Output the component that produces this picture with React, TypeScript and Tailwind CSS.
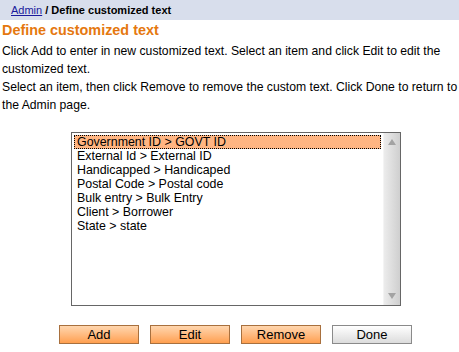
const items = [
  'Government ID > GOVT ID',
  'External Id > External ID',
  'Handicapped > Handicaped',
  'Postal Code > Postal code',
  'Bulk entry > Bulk Entry',
  'Client > Borrower',
  'State > state',
];

const buttons = ['Add', 'Edit', 'Remove'];

const App = () => {
  return (
    <div className="w-[459px] h-[352px] bg-white text-black font-['Liberation_Sans',Arial,sans-serif] overflow-hidden">
      {/* breadcrumb */}
      <div className="h-[20px] bg-[#d8deec] pl-[11px] text-[11px] leading-[20px]">
        <a href="#" className="text-[#1a1a9c] underline">Admin</a>
        <span className="font-bold"> / Define customized text</span>
      </div>

      <h1 className="mt-[1px] pl-[2px] text-[14.4px] leading-[18px] font-bold text-[#e5780f]">
        Define customized text
      </h1>
      <p className="mt-[3px] pl-[2px] text-[12.2px] leading-[18px]">
        Click Add to enter in new customized text. Select an item and click Edit to edit the customized text.
        <br />
        Select an item, then click Remove to remove the custom text. Click Done to return to the Admin page.
      </p>

      {/* list box */}
      <div className="mt-[18px] ml-[71px] w-[330px] h-[174px] border border-[#666] flex">
        <div className="flex-1 pt-[2px] px-[2px] text-[12.4px] leading-[14px]">
          {items.map((item, i) => (
            <div
              key={item}
              className={
                i === 0
                  ? 'h-[14px] pl-[2px] bg-[#ffb582] border border-dotted border-black leading-[12px]'
                  : 'h-[14px] pl-[3px]'
              }
            >
              {item}
            </div>
          ))}
        </div>
        <div className="w-[17px] border-l border-[#f4f4f4] bg-gradient-to-r from-[#ececec] to-[#cfcfcf] flex flex-col justify-between items-center py-[6px]">
          <div className="w-0 h-0 border-l-[4px] border-r-[4px] border-b-[6px] border-l-transparent border-r-transparent border-b-[#a3a3a3]" />
          <div className="w-0 h-0 border-l-[4px] border-r-[4px] border-t-[6px] border-l-transparent border-r-transparent border-t-[#a3a3a3]" />
        </div>
      </div>

      {/* buttons */}
      <div className="mt-[19px] ml-[59px] flex gap-[11px]">
        {buttons.map(b => (
          <button
            key={b}
            className="w-[80px] h-[19px] border border-[#a8703e] bg-gradient-to-b from-[#ffd6ae] to-[#ff9f4e] text-[13px] leading-[17px] text-black"
          >
            {b}
          </button>
        ))}
        <button className="w-[80px] h-[19px] border border-[#8a8a8a] bg-gradient-to-b from-[#ffffff] to-[#dcdcdc] text-[13px] leading-[17px] text-black">
          Done
        </button>
      </div>
    </div>
  );
};

export default App;
